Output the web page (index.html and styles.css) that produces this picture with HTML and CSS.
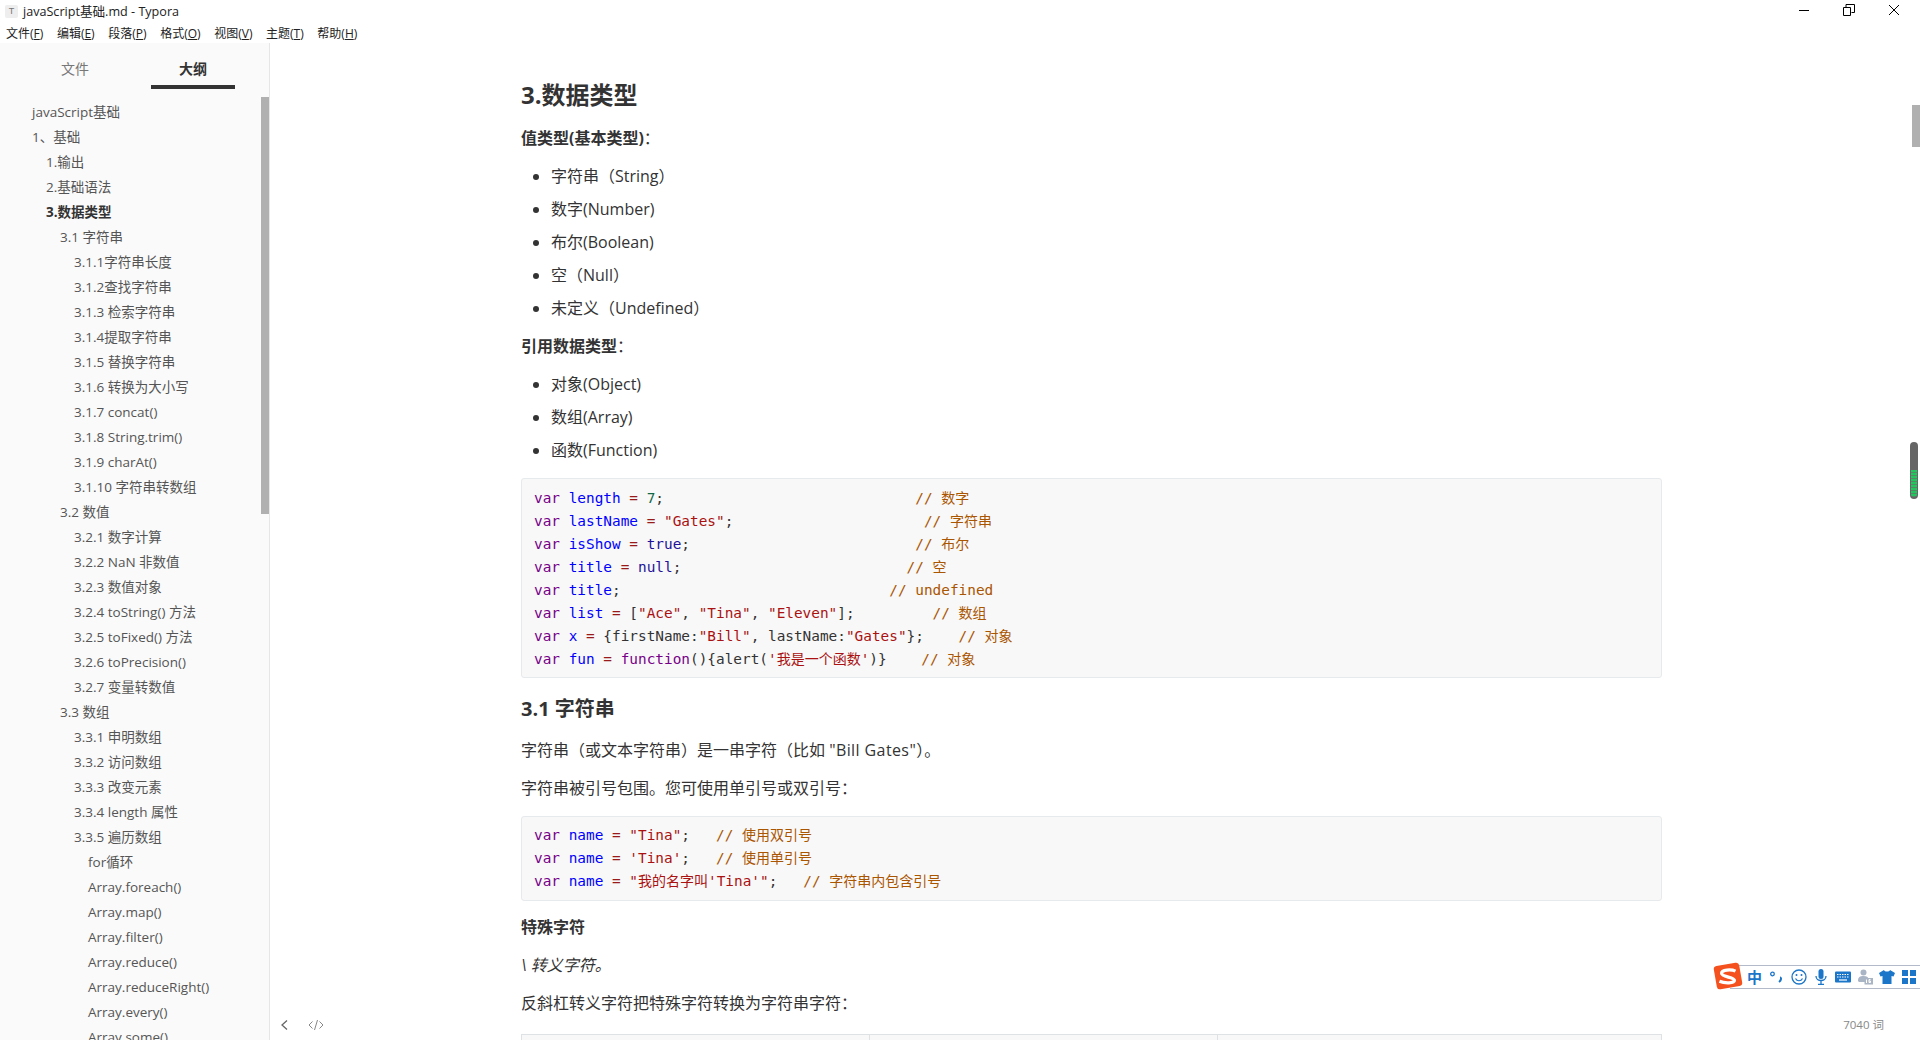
FILE: index.html
```html
<!DOCTYPE html>
<html lang="zh-CN">
<head>
<meta charset="utf-8">
<title>javaScript基础.md - Typora</title>
<link rel="stylesheet" href="styles.css">
</head>
<body>
<div class="app">
  <header class="titlebar">
    <div class="title-left">
      <span class="app-icon">T</span>
      <span class="title-text">javaScript基础.md - Typora</span>
    </div>
    <div class="win-controls">
      <svg class="win-btn" viewBox="0 0 12 12"><path d="M1 6.5h10" stroke="#000" fill="none"/></svg>
      <svg class="win-btn" viewBox="0 0 12 12"><path d="M.5 3.5h7v8h-7zM3 3.5V.5h8.500v8h-3" stroke="#000" fill="none"/></svg>
      <svg class="win-btn" viewBox="0 0 12 12"><path d="M1 1l10 10M11 1L1 11" stroke="#000" fill="none"/></svg>
    </div>
  </header>
  <nav class="menubar">
    <span>文件(<u>F</u>)</span><span>编辑(<u>E</u>)</span><span>段落(<u>P</u>)</span><span>格式(<u>O</u>)</span><span>视图(<u>V</u>)</span><span>主题(<u>T</u>)</span><span>帮助(<u>H</u>)</span>
  </nav>
  <div class="workspace">
    <aside class="sidebar">
      <div class="tabs">
        <div class="tab">文件</div>
        <div class="tab active">大纲</div>
      </div>
      <ul class="outline">
        <li class="l1 tight">javaScript基础</li>
        <li class="l1">1、基础</li>
        <li class="l2">1.输出</li>
        <li class="l2">2.基础语法</li>
        <li class="l2 current">3.数据类型</li>
        <li class="l3">3.1 字符串</li>
        <li class="l4">3.1.1字符串长度</li>
        <li class="l4">3.1.2查找字符串</li>
        <li class="l4">3.1.3 检索字符串</li>
        <li class="l4">3.1.4提取字符串</li>
        <li class="l4">3.1.5 替换字符串</li>
        <li class="l4">3.1.6 转换为大小写</li>
        <li class="l4">3.1.7 concat()</li>
        <li class="l4">3.1.8 String.trim()</li>
        <li class="l4">3.1.9 charAt()</li>
        <li class="l4">3.1.10 字符串转数组</li>
        <li class="l3">3.2 数值</li>
        <li class="l4">3.2.1 数字计算</li>
        <li class="l4">3.2.2 NaN 非数值</li>
        <li class="l4">3.2.3 数值对象</li>
        <li class="l4">3.2.4 toString() 方法</li>
        <li class="l4">3.2.5 toFixed() 方法</li>
        <li class="l4">3.2.6 toPrecision()</li>
        <li class="l4">3.2.7 变量转数值</li>
        <li class="l3">3.3 数组</li>
        <li class="l4">3.3.1 申明数组</li>
        <li class="l4">3.3.2 访问数组</li>
        <li class="l4">3.3.3 改变元素</li>
        <li class="l4">3.3.4 length 属性</li>
        <li class="l4">3.3.5 遍历数组</li>
        <li class="l5">for循环</li>
        <li class="l5">Array.foreach()</li>
        <li class="l5">Array.map()</li>
        <li class="l5">Array.filter()</li>
        <li class="l5">Array.reduce()</li>
        <li class="l5">Array.reduceRight()</li>
        <li class="l5">Array.every()</li>
        <li class="l5">Array.some()</li>
      </ul>
      <div class="side-thumb"></div>
    </aside>
    <main class="editor">
      <article class="doc">
        <h2>3.数据类型</h2>
        <p><strong>值类型(基本类型)</strong>：</p>
        <ul class="bullets">
          <li>字符串（String）</li>
          <li>数字(Number)</li>
          <li>布尔(Boolean)</li>
          <li>空（Null）</li>
          <li>未定义（Undefined）</li>
        </ul>
        <p><strong>引用数据类型</strong>：</p>
        <ul class="bullets bullets-next">
          <li>对象(Object)</li>
          <li>数组(Array)</li>
          <li>函数(Function)</li>
        </ul>
        <pre class="code"><span class="k">var</span> <span class="d">length</span> <span class="o">=</span> <span class="n">7</span>;                             <span class="c">// <span class="cn">数字</span></span>
<span class="k">var</span> <span class="d">lastName</span> <span class="o">=</span> <span class="s">"Gates"</span>;                      <span class="c">// <span class="cn">字符串</span></span>
<span class="k">var</span> <span class="d">isShow</span> <span class="o">=</span> <span class="a">true</span>;                          <span class="c">// <span class="cn">布尔</span></span>
<span class="k">var</span> <span class="d">title</span> <span class="o">=</span> <span class="a">null</span>;                          <span class="c">// <span class="cn">空</span></span>
<span class="k">var</span> <span class="d">title</span>;                               <span class="c">// undefined</span>
<span class="k">var</span> <span class="d">list</span> <span class="o">=</span> [<span class="s">"Ace"</span>, <span class="s">"Tina"</span>, <span class="s">"Eleven"</span>];         <span class="c">// <span class="cn">数组</span></span>
<span class="k">var</span> <span class="d">x</span> <span class="o">=</span> {firstName:<span class="s">"Bill"</span>, lastName:<span class="s">"Gates"</span>};    <span class="c">// <span class="cn">对象</span></span>
<span class="k">var</span> <span class="d">fun</span> <span class="o">=</span> <span class="k">function</span>(){alert(<span class="s">'<span class="cn">我是一个函数</span>'</span>)}    <span class="c">// <span class="cn">对象</span></span></pre>
        <h3>3.1 字符串</h3>
        <p>字符串（或文本字符串）是一串字符（比如 <span class="wide">"Bill Gates"</span>）。</p>
        <p>字符串被引号包围。您可使用单引号或双引号：</p>
        <pre class="code code-short"><span class="k">var</span> <span class="d">name</span> <span class="o">=</span> <span class="s">"Tina"</span>;   <span class="c">// <span class="cn">使用双引号</span></span>
<span class="k">var</span> <span class="d">name</span> <span class="o">=</span> <span class="s">'Tina'</span>;   <span class="c">// <span class="cn">使用单引号</span></span>
<span class="k">var</span> <span class="d">name</span> <span class="o">=</span> <span class="s">"<span class="cn">我的名字叫</span>'Tina'"</span>;   <span class="c">// <span class="cn">字符串内包含引号</span></span></pre>
        <h4>特殊字符</h4>
        <p><em>\ 转义字符。</em></p>
        <p>反斜杠转义字符把特殊字符转换为字符串字符：</p>
        <div class="table-top">
          <div class="cell c-a"></div>
          <div class="cell c-b"></div>
          <div class="cell c-c"></div>
        </div>
      </article>
      <div class="main-thumb"></div>
      <div class="voice-meter"><div class="voice-level"></div></div>
      <div class="footer-left">
        <svg class="foot-icon" viewBox="0 0 12 12"><path d="M8 1.500L3 6l5 4.500" fill="none" stroke="#666" stroke-width="1.300"/></svg>
        <svg class="foot-icon code-icon" viewBox="0 0 16 12"><path d="M4.500 2.500L1 6l3.500 3.500M11.500 2.500L15 6l-3.500 3.500M9.500 1L6.500 11" fill="none" stroke="#888"/></svg>
      </div>
      <div class="wordcount">7040 词</div>
      <div class="ime">
        <svg class="ime-logo" viewBox="0 0 28 28"><rect x="2" y="3" width="24" height="22" rx="3" fill="#f4511e" transform="rotate(-10 14 14)"/><path d="M21 9.500C17 7.500 8 8 8 11.500S20 15 20 18s-9 3-14 1" fill="none" stroke="#fff" stroke-width="3"/></svg>
        <span class="ime-zh">中</span>
        <svg class="ime-i" viewBox="0 0 16 16"><circle cx="3.500" cy="5" r="1.800" fill="none" stroke="#1b75c9" stroke-width="1.300"/><path d="M11 8.500c1.500 0 1.500 2.500-1 4.500" fill="none" stroke="#1b75c9" stroke-width="2"/></svg>
        <svg class="ime-i" viewBox="0 0 16 16"><circle cx="8" cy="8" r="7" fill="none" stroke="#1b75c9" stroke-width="1.300"/><circle cx="5.500" cy="6" r="1" fill="#1b75c9"/><circle cx="10.500" cy="6" r="1" fill="#1b75c9"/><path d="M4.500 9.500c1.500 3 5.500 3 7 0" fill="none" stroke="#1b75c9" stroke-width="1.200"/></svg>
        <svg class="ime-i" viewBox="0 0 16 16"><rect x="5.500" y="0" width="5" height="10" rx="2.500" fill="#1b75c9"/><path d="M3 7c0 6 10 6 10 0M8 12v3M5 15.500h6" fill="none" stroke="#1b75c9" stroke-width="1.300"/></svg>
        <svg class="ime-i" viewBox="0 0 16 16"><rect x="0" y="2.500" width="16" height="11" rx="1" fill="#1b75c9"/><path d="M2 5.500h12M2 8h12" stroke="#fff" stroke-dasharray="1.500 1" fill="none"/><path d="M4 11h8" stroke="#fff" stroke-width="1.200"/></svg>
        <svg class="ime-i" viewBox="0 0 16 16"><circle cx="6.500" cy="3.500" r="3" fill="#a9b4c4"/><path d="M1 12c0-4 2-5 5.500-5S11 8 11 9H8v4H2z" fill="#a9b4c4"/><rect x="7.500" y="9" width="8.500" height="6.500" fill="#a9b4c4"/><path d="M9.500 10.500v3.500M13.500 10.500h-1.500v3h1.500v-1.500H12" fill="none" stroke="#fff"/></svg>
        <svg class="ime-i" viewBox="0 0 16 16"><path d="M5 1L0 4l1.500 3.500L3.500 7v8h9V7l2 .5L16 4l-5-3c-.5 2-5.500 2-6 0z" fill="#1b75c9"/></svg>
        <svg class="ime-i" viewBox="0 0 16 16"><path d="M1 1h6v6H1zM9 1h6v6H9zM1 9h6v6H1zM9 9h6v6H9z" fill="#1b75c9"/></svg>
      </div>
    </main>
  </div>
</div>
</body>
</html>
```
FILE: styles.css
```css
* { box-sizing: border-box; }
html, body { margin: 0; padding: 0; height: 100%; overflow: hidden; background: #fff; }
body { font-family: "Open Sans", "Noto Sans CJK SC", sans-serif; color: #333; }
.app { display: flex; flex-direction: column; height: 1040px; }

.titlebar { display: flex; justify-content: space-between; height: 23px; flex: none; }
.title-left { display: flex; align-items: center; padding-left: 5px; gap: 5px; }
.app-icon { width: 13px; height: 13px; background: #eee; border-radius: 2px; font: 9px/13px "Liberation Sans", sans-serif; color: #777; text-align: center; }
.title-text { font-size: 12.6px; color: #222; line-height: 23px; }
.win-controls { display: flex; gap: 33px; padding: 4px 20px 0 0; }
.win-btn { width: 12px; height: 12px; }

.menubar { display: flex; gap: 13.6px; height: 20px; flex: none; padding: 1px 0 0 6px; font-size: 12px; line-height: 20px; color: #222; }

.workspace { display: flex; flex: 1; min-height: 0; }
.sidebar { position: relative; width: 270px; flex: none; background: #fafafa; border-right: 1px solid #e6e6e6; overflow: hidden; }
.tabs { display: flex; height: 57px; padding-left: 33px; }
.tab { width: 84px; height: 46px; margin-right: 34px; text-align: center; font-size: 14px; line-height: 52px; color: #777; }
.tab.active { color: #333; font-weight: 700; border-bottom: 4px solid #333; }
.outline { list-style: none; margin: 0; padding: 0; font-size: 13.5px; color: #555; }
.outline li { height: 25px; line-height: 25px; white-space: nowrap; }
.l1 { padding-left: 32px; }
.l2 { padding-left: 46px; }
.l3 { padding-left: 60px; }
.l4 { padding-left: 74px; }
.l5 { padding-left: 88px; }
.outline .current { font-weight: 700; color: #333; }
.side-thumb { position: absolute; right: 0; top: 54px; width: 8px; height: 417px; background: #b0b0b0; }

.editor { position: relative; flex: 1; min-width: 0; overflow: hidden; }
.doc { width: 1141px; margin-left: 251px; font-size: 16px; line-height: 25.6px; }
.doc h2 { font-size: 24px; line-height: 36px; margin: 33.5px 0 0; font-weight: 700; }
.doc p { margin: 12.2px 0 0; min-height: 25.6px; }
.doc h2 + p { margin-top: 13.3px; }
.bullets { margin: 5.5px 0 0; padding: 0 0 0 30px; }
.bullets-next { margin-top: 5px; }
.bullets li { height: 33px; padding-top: 7.4px; }
.doc .bullets + p { margin-top: 12.5px; }
.code { margin: 14px 0 0; padding: 8px 10px 7px 12px; height: 200px; background: #f8f8f8; border: 1px solid #e7eaed; border-radius: 3px; font-family: "DejaVu Sans Mono", "Noto Sans CJK SC", monospace; font-size: 14.4px; line-height: 23px; color: #333; overflow: hidden; }
.cn { font-size: 14px; }
.wide { letter-spacing: .4px; }
.doc h3 { font-size: 20px; line-height: 30px; margin: 16px 0 0; font-weight: 700; }
.doc h3 + p { margin-top: 14px; }
.code-short { height: 85px; padding-top: 7px; margin-top: 15px; }
.doc h4 { font-size: 16px; line-height: 25.6px; margin: 14px 0 0; font-weight: 700; }
.k { color: #770088; }
.d { color: #0000ff; }
.o { color: #981a1a; }
.s { color: #aa1111; }
.n { color: #116644; }
.a { color: #221199; }
.c { color: #aa5500; }

.table-top { display: flex; height: 6px; margin-top: 17.5px; border-top: 1px solid #dfe2e5; border-left: 1px solid #dfe2e5; border-right: 1px solid #dfe2e5; background: #f8f8f8; }
.cell { height: 100%; }
.c-a { width: 348px; border-right: 1px solid #dfe2e5; }
.c-b { width: 348px; border-right: 1px solid #dfe2e5; }
.c-c { flex: 1; }

.main-thumb { position: absolute; top: 62px; right: 0; width: 8px; height: 42px; background: #b0b0b0; }
.voice-meter { position: absolute; top: 399px; right: 2px; width: 8px; height: 57px; padding: 0 1px 2px; border-radius: 4px; background: #666; display: flex; align-items: flex-end; }
.voice-level { width: 100%; height: 27px; background: repeating-linear-gradient(to bottom, #22c55e 0, #22c55e 2px, #4d8c63 2px, #4d8c63 3px); border-radius: 0 0 3px 3px; }
.footer-left { position: absolute; left: 9px; bottom: 9px; display: flex; gap: 17px; align-items: center; }
.foot-icon { width: 12px; height: 12px; display: block; }
.code-icon { width: 16px; height: 12px; }
.wordcount { position: absolute; right: 36px; bottom: 6px; font-size: 11.5px; line-height: 18px; color: #888; }
.ime { position: absolute; left: 1460px; top: 922px; width: 190px; height: 24px; background: #fff; border-top: 1px solid #b3bbcb; border-bottom: 1px solid #b3bbcb; display: flex; align-items: center; gap: 6px; padding-left: 17px; }
.ime-logo { position: absolute; left: -17px; top: -5px; width: 30px; height: 30px; }
.ime-zh { color: #1b75c9; font-size: 15px; font-weight: 700; line-height: 20px; width: 15px; margin-right: 1px; }
.ime-i { width: 16px; height: 16px; flex: none; }
```
